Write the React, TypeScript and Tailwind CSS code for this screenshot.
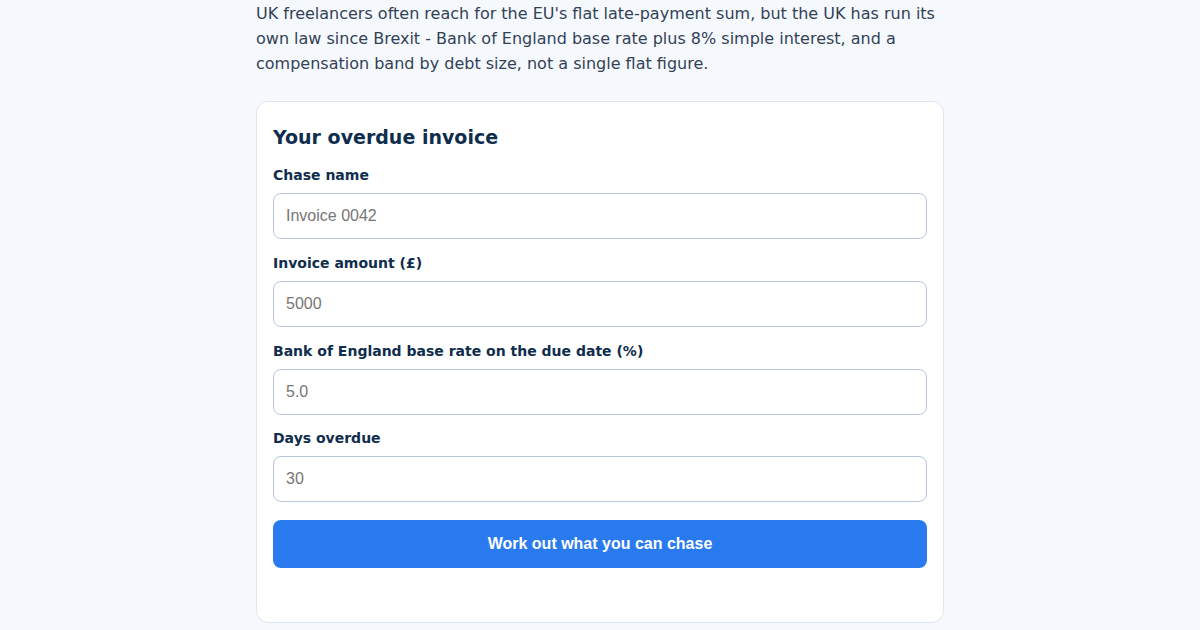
import { useState } from "react";

const fields = [
  { id: "name", label: "Chase name", placeholder: "Invoice 0042" },
  { id: "amount", label: "Invoice amount (£)", placeholder: "5000" },
  { id: "rate", label: "Bank of England base rate on the due date (%)", placeholder: "5.0" },
  { id: "days", label: "Days overdue", placeholder: "30" },
];

export default function App() {
  const [values, setValues] = useState<Record<string, string>>({});

  return (
    <div className="min-h-screen bg-[#f5f9fe] font-['DejaVu_Sans',sans-serif]">
      <div className="mx-auto w-[688px] pt-[2px]">
        <p className="mb-[25px] text-[16px] leading-[1.55] text-[#334155]">
          UK freelancers often reach for the EU's flat late-payment sum, but the UK has run its
          own law since Brexit - Bank of England base rate plus 8% simple interest, and a
          compensation band by debt size, not a single flat figure.
        </p>

        <form
          className="rounded-xl border border-[#dfe6f0] bg-white px-4 pt-4 pb-[54px]"
          onSubmit={(e) => e.preventDefault()}
        >
          <h2 className="mt-[7px] mb-4 text-[19px] font-bold leading-6 text-[#0f2d4d]">
            Your overdue invoice
          </h2>

          {fields.map((f) => (
            <div key={f.id} className="mb-[13.7px]">
              <label
                htmlFor={f.id}
                className="mb-2 block text-[14px] font-bold leading-5 text-[#0f2d4d]"
              >
                {f.label}
              </label>
              <input
                id={f.id}
                value={values[f.id] ?? ""}
                onChange={(e) => setValues({ ...values, [f.id]: e.target.value })}
                placeholder={f.placeholder}
                className="block h-[46px] w-full rounded-lg border border-[#b8c4d9] bg-white px-3 font-['Liberation_Sans',Arial,sans-serif] text-[16px] text-[#1e293b] placeholder:text-[#767676] outline-none"
              />
            </div>
          ))}

          <button
            type="submit"
            className="mt-[18px] block h-12 w-full rounded-lg bg-[#2a7aef] font-['Liberation_Sans',Arial,sans-serif] text-[16px] font-bold text-white"
          >
            Work out what you can chase
          </button>
        </form>
      </div>
    </div>
  );
}
